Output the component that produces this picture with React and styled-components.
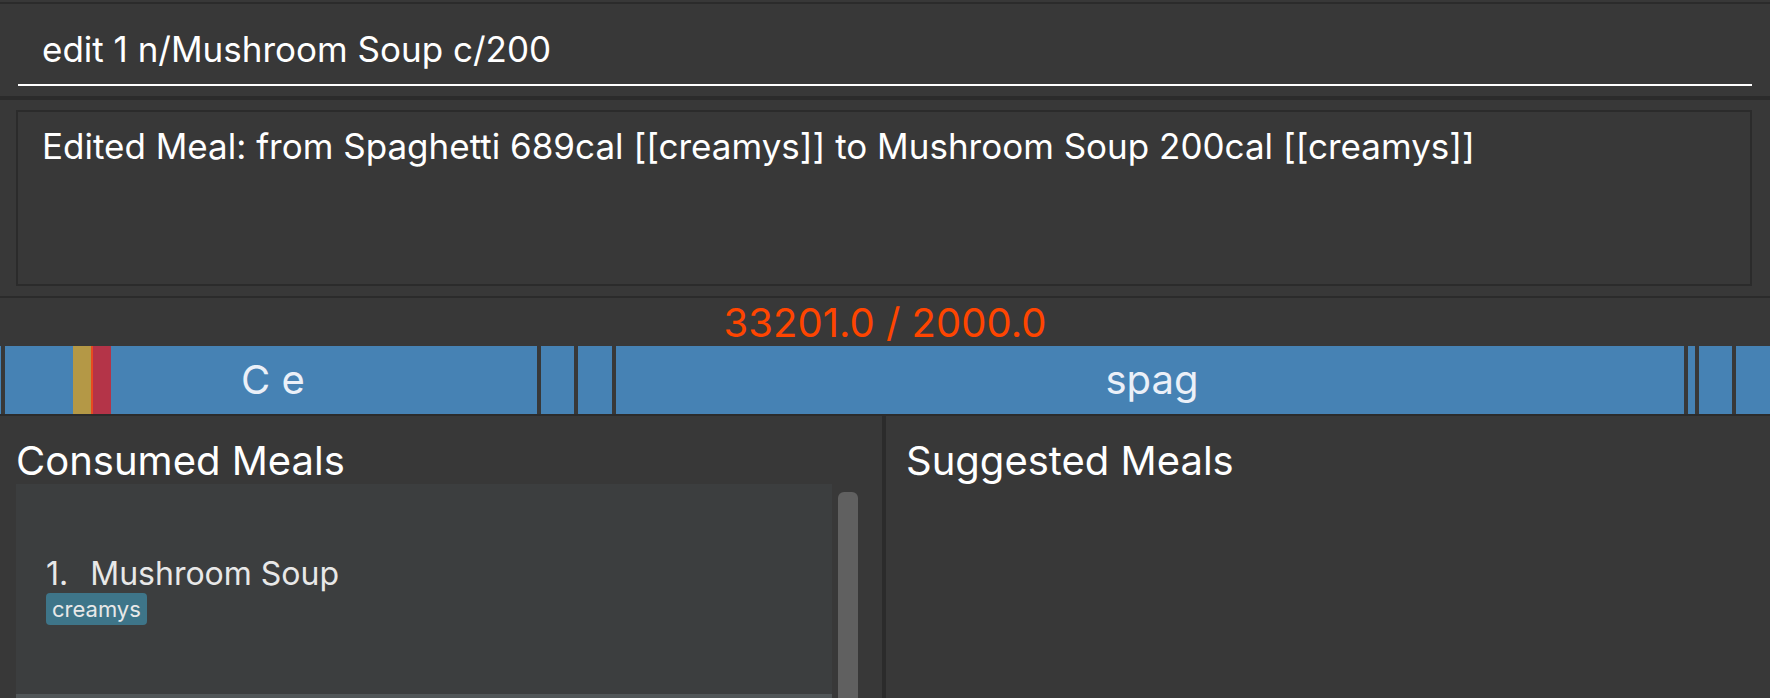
import React from "react";
import styled, { createGlobalStyle } from "styled-components";

const line = "#2b2b2b";

const GlobalStyle = createGlobalStyle`
  * { box-sizing: border-box; }
  body {
    margin: 0;
    background: #383838;
    color: #fff;
    font-family: Inter, "Liberation Sans", sans-serif;
  }
`;

const Window = styled.main`
  display: flex;
  flex-direction: column;
  height: 100vh;
  padding-top: 2px;
  overflow: hidden;
`;

const CommandBar = styled.form`
  flex: none;
  padding: 12px 18px 10px;
  border-top: 2px solid ${line};
  border-bottom: 2px solid ${line};
`;

const CommandInput = styled.input`
  display: block;
  width: 100%;
  height: 70px;
  padding: 0 24px 2px;
  border: 0;
  border-bottom: 2px solid #fff;
  outline: 0;
  background: transparent;
  color: #fff;
  font: 400 35px/40px Inter, "Liberation Sans", sans-serif;
`;

const ResultPane = styled.section`
  flex: none;
  padding: 10px 18px 10px 16px;
  border-top: 2px solid ${line};
  border-bottom: 2px solid ${line};
`;

const ResultDisplay = styled.textarea`
  display: block;
  width: 100%;
  height: 176px;
  padding: 14px 24px;
  border: 2px solid ${line};
  outline: 0;
  resize: none;
  overflow: hidden;
  background: transparent;
  color: #fff;
  font: 400 35px/40px Inter, "Liberation Sans", sans-serif;
`;

const CaloriePane = styled.section`
  flex: none;
  border-bottom: 2px solid ${line};
`;

const CalorieTotal = styled.p`
  margin: 0;
  padding-top: 2px;
  color: #ff4500;
  font-size: 40px;
  line-height: 46px;
  text-align: center;
`;

const Bar = styled.div`
  position: relative;
  display: flex;
  gap: 4px;
  height: 68px;
`;

const Segment = styled.div`
  display: flex;
  align-items: center;
  justify-content: center;
  flex: ${(p) => p.$share} 1 0;
  min-width: 0;
  background: #4682b4;
`;

const SegmentLabel = styled.span`
  padding-left: 4px;
  color: #ebf0f8;
  font-size: 40px;
  line-height: 48px;
`;

const Limits = styled.div`
  position: absolute;
  top: 0;
  bottom: 0;
  left: 73px;
  display: flex;
`;

const Limit = styled.span`
  width: ${(p) => p.$width}px;
  background: ${(p) => p.$color};
`;

const Panels = styled.div`
  display: grid;
  grid-template-columns: 1fr 1fr;
  flex: 1;
  min-height: 0;
`;

const Panel = styled.section`
  display: flex;
  flex-direction: column;
  min-height: 0;
  padding: 22px 24px 0 ${(p) => (p.$divided ? "20px" : "16px")};
  border: 0 solid ${line};
  border-left-width: ${(p) => (p.$divided ? "1px" : "0")};
  border-right-width: ${(p) => (p.$divided ? "0" : "3px")};
`;

const PanelTitle = styled.h2`
  flex: none;
  margin: 0;
  font-size: 40px;
  font-weight: 400;
  line-height: 46px;
`;

const ListArea = styled.div`
  display: flex;
  flex: 1;
  gap: 6px;
  min-height: 0;
`;

const MealList = styled.ol`
  flex: 1;
  margin: 0;
  padding: 0;
  overflow: hidden;
  list-style: none;
`;

const MealCard = styled.li`
  display: flex;
  flex-direction: column;
  align-items: flex-start;
  justify-content: center;
  height: 210px;
  padding: 2px 30px 0;
  background: ${(p) => (p.$alt ? "#515658" : "#3c3e3f")};
  color: #e8e8e8;
`;

const MealName = styled.div`
  display: flex;
  gap: 22px;
  font-size: 32px;
  line-height: 38px;
`;

const Tag = styled.span`
  padding: 2px 6px;
  border-radius: 4px;
  background: #3e7589;
  font-size: 22px;
  line-height: 28px;
`;

const ScrollThumb = styled.div`
  width: 20px;
  margin-top: 8px;
  border-radius: 6px 6px 0 0;
  background: #606060;
`;

const meals = [
  { share: 1 },
  { share: 532, name: "C e" },
  { share: 33 },
  { share: 34 },
  { share: 1068, name: "spag" },
  { share: 7 },
  { share: 33 },
  { share: 34 },
];

const limits = [
  { width: 18, color: "#b49846" },
  { width: 2, color: "#e84a20" },
  { width: 18, color: "#b43448" },
];

export default function App() {
  return (
    <>
      <GlobalStyle />
      <Window>
        <CommandBar onSubmit={(e) => e.preventDefault()}>
          <CommandInput
            aria-label="Command"
            defaultValue="edit 1 n/Mushroom Soup c/200"
            spellCheck={false}
          />
        </CommandBar>
        <ResultPane>
          <ResultDisplay
            aria-label="Result"
            readOnly
            spellCheck={false}
            value="Edited Meal: from Spaghetti 689cal [[creamys]] to Mushroom Soup 200cal [[creamys]]"
          />
        </ResultPane>
        <CaloriePane>
          <CalorieTotal>33201.0 / 2000.0</CalorieTotal>
          <Bar>
            {meals.map((meal, i) => (
              <Segment key={i} $share={meal.share}>
                {meal.name && <SegmentLabel>{meal.name}</SegmentLabel>}
              </Segment>
            ))}
            <Limits>
              {limits.map((limit) => (
                <Limit key={limit.color} $width={limit.width} $color={limit.color} />
              ))}
            </Limits>
          </Bar>
        </CaloriePane>
        <Panels>
          <Panel>
            <PanelTitle>Consumed Meals</PanelTitle>
            <ListArea>
              <MealList>
                <MealCard>
                  <MealName>
                    <span>1.</span>
                    <span>Mushroom Soup</span>
                  </MealName>
                  <Tag>creamys</Tag>
                </MealCard>
                <MealCard $alt />
              </MealList>
              <ScrollThumb />
            </ListArea>
          </Panel>
          <Panel $divided>
            <PanelTitle>Suggested Meals</PanelTitle>
          </Panel>
        </Panels>
      </Window>
    </>
  );
}
